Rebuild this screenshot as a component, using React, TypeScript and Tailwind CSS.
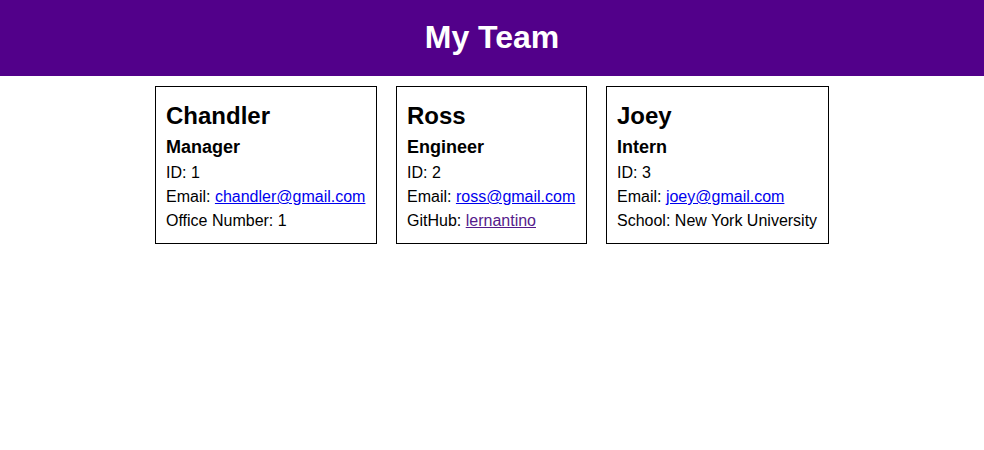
import React from "react";

type Member = {
  name: string;
  role: string;
  id: number;
  email: string;
  extraLabel: string;
  extraValue: string;
  extraLink?: boolean;
  width: string;
};

const members: Member[] = [
  { name: "Chandler", role: "Manager", id: 1, email: "chandler@gmail.com", extraLabel: "Office Number", extraValue: "1", width: "w-[222px]" },
  { name: "Ross", role: "Engineer", id: 2, email: "ross@gmail.com", extraLabel: "GitHub", extraValue: "lernantino", extraLink: true, width: "w-[191px]" },
  { name: "Joey", role: "Intern", id: 3, email: "joey@gmail.com", extraLabel: "School", extraValue: "New York University", width: "w-[223px]" },
];

export default function App() {
  return (
    <div className="min-h-[450px] bg-white text-black font-['Liberation_Sans',Arial,sans-serif] leading-[1.5]">
      <header className="h-[76px] bg-[#52008a] flex items-center justify-center">
        <h1 className="text-[32px] font-bold text-white leading-[48px] pb-[2px]">My Team</h1>
      </header>
      <main className="flex justify-center gap-[19px] mt-[10px]">
        {members.map((m) => (
          <div key={m.id} className={`${m.width} border border-black pt-[11px] pb-[10px] pl-[10px] pr-[4px] whitespace-nowrap`}>
            <h2 className="text-[24px] font-bold leading-[36px]">{m.name}</h2>
            <h3 className="text-[18px] font-bold leading-[27px]">{m.role}</h3>
            <p className="text-[16px] leading-[24px]">ID: {m.id}</p>
            <p className="text-[16px] leading-[24px]">
              Email: <a href="#" className="text-[#0000ee] underline">{m.email}</a>
            </p>
            <p className="text-[16px] leading-[24px]">
              {m.extraLabel}:{" "}
              {m.extraLink ? (
                <a href="#" className="text-[#551a8b] underline">{m.extraValue}</a>
              ) : (
                m.extraValue
              )}
            </p>
          </div>
        ))}
      </main>
    </div>
  );
}
